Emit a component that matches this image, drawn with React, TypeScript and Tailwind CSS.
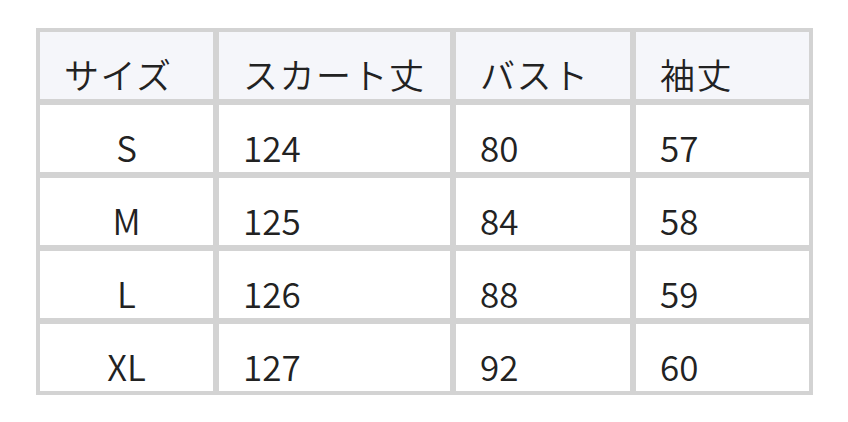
const HEADERS = ['サイズ', 'スカート丈', 'バスト', '袖丈'];

const ROWS = [
  ['S', '124', '80', '57'],
  ['M', '125', '84', '58'],
  ['L', '126', '88', '59'],
  ['XL', '127', '92', '60'],
];

const WIDTHS = ['w-[179px]', 'w-[237px]', 'w-[180px]', 'w-[179px]'];

export default function App() {
  return (
    <div
      className="min-h-screen bg-white pl-[36px] pt-[28px] text-[#222]"
      style={{ fontFamily: '"Noto Sans CJK JP", "Noto Sans", sans-serif' }}
    >
      <table className="table-fixed w-[777px] border-separate border-spacing-0 border border-[#d3d3d3] text-[35px] leading-[50px] font-[350]">
        <thead>
          <tr>
            {HEADERS.map((h, i) => (
              <th
                key={h}
                className={`${WIDTHS[i]} h-[73px] border-[3px] border-[#d3d3d3] bg-[#f5f6fa] pl-[24px] pt-[17px] text-left align-top font-[350] tracking-[1.5px]`}
              >
                {h}
              </th>
            ))}
          </tr>
        </thead>
        <tbody>
          {ROWS.map((row) => (
            <tr key={row[0]}>
              {row.map((cell, i) => (
                <td
                  key={i}
                  className={`h-[73px] border-[3px] border-[#d3d3d3] pt-[17px] align-top ${
                    i === 0 ? 'text-center' : 'pl-[24px] text-left'
                  }`}
                >
                  {cell}
                </td>
              ))}
            </tr>
          ))}
        </tbody>
      </table>
    </div>
  );
}
